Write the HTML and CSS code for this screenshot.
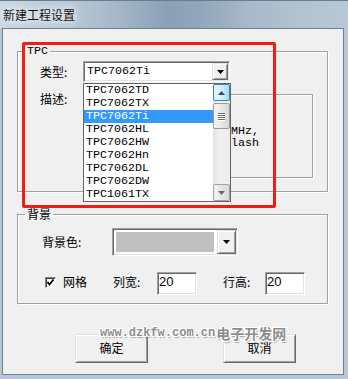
FILE: index.html
```html
<!DOCTYPE html>
<html lang="zh-CN">
<head>
    <meta charset="UTF-8">
    <title>新建工程设置</title>
    <link rel="stylesheet" href="styles.css">
</head>
<body>
    <div class="window">
        <!-- 标题栏 -->
        <div class="titlebar">新建工程设置</div>

        <div class="client">
            <!-- TPC 分组 -->
            <div class="group group-tpc">
                <span class="caption mono">TPC</span>
                <div class="field-row type-row">
                    <span class="label">类型:</span>
                    <div class="combo">
                        <span class="combo-text mono">TPC7062Ti</span>
                        <span class="combo-btn">
                            <svg width="7" height="4" viewBox="0 0 7 4"><polygon points="0,0 7,0 3.5,4" fill="#000"/></svg>
                        </span>
                        <!-- 下拉列表 -->
                        <div class="droplist">
                            <ul class="items mono">
                                <li>TPC7062TD</li>
                                <li>TPC7062TX</li>
                                <li class="selected">TPC7062Ti</li>
                                <li>TPC7062HL</li>
                                <li>TPC7062HW</li>
                                <li>TPC7062Hn</li>
                                <li>TPC7062DL</li>
                                <li>TPC7062DW</li>
                                <li>TPC1061TX</li>
                            </ul>
                            <div class="scrollbar">
                                <span class="sb-btn sb-up">
                                    <svg width="7" height="4" viewBox="0 0 7 4"><polygon points="0,4 7,4 3.5,0" fill="#2c4a66"/></svg>
                                </span>
                                <div class="sb-track">
                                    <span class="sb-thumb">
                                        <span class="grip"></span>
                                        <span class="grip"></span>
                                        <span class="grip"></span>
                                        <span class="grip"></span>
                                    </span>
                                </div>
                                <span class="sb-btn sb-down">
                                    <svg width="7" height="4" viewBox="0 0 7 4"><polygon points="0,0 7,0 3.5,4" fill="#6a6a6a"/></svg>
                                </span>
                            </div>
                        </div>
                    </div>
                </div>
                <div class="field-row desc-row">
                    <span class="label desc-label">描述:</span>
                    <div class="desc-frame mono">
                        <div>CPU 600MHz,</div>
                        <div>128MB Flash</div>
                    </div>
                </div>
            </div>

            <!-- 背景 分组 -->
            <div class="group group-bg">
                <span class="caption">背景</span>
                <div class="field-row color-row">
                    <span class="label color-label">背景色:</span>
                    <div class="color-combo">
                        <span class="swatch"></span>
                        <span class="color-btn">
                            <svg width="7" height="4" viewBox="0 0 7 4"><polygon points="0,0 7,0 3.5,4" fill="#000"/></svg>
                        </span>
                    </div>
                </div>
                <div class="field-row grid-row">
                    <span class="checkbox">
                        <svg width="9" height="9" viewBox="0 0 9 9"><polyline points="1.5,4 3.5,6.5 7.5,1.5" fill="none" stroke="#000" stroke-width="1.8"/></svg>
                    </span>
                    <span class="check-label">网格</span>
                    <span class="label col-label">列宽:</span>
                    <span class="edit">20</span>
                    <span class="label row-label">行高:</span>
                    <span class="edit">20</span>
                </div>
            </div>

            <!-- 按钮 -->
            <div class="buttons">
                <span class="button">确定</span>
                <span class="button">取消</span>
            </div>

            <!-- 水印 -->
            <div class="watermark"><span class="wm-url">www.dzkfw.com.cn</span><span class="wm-name">电子开发网</span></div>
        </div>

        <!-- 红色标注框 -->
        <div class="mark"></div>
    </div>
</body>
</html>
```

FILE: styles.css
```css
/* 全局 */
body {
    margin: 0;
    padding: 0;
    font-family: "Noto Sans CJK SC", "Liberation Sans", sans-serif;
    font-size: 12px;
    color: #000;
    overflow: hidden;
}

.mono {
    font-family: "Liberation Mono", "Noto Sans CJK SC", monospace;
    font-size: 11.67px;
}

/* 窗口 */
.window {
    position: relative;
    width: 348px;
    height: 379px;
    background: #b7c6d5;
    display: flex;
    flex-direction: column;
}

.titlebar {
    height: 28px;
    line-height: 28px;
    padding-left: 3px;
    border-top: 1px solid #6b7c8d;
    box-sizing: border-box;
    background: linear-gradient(90deg, #cad6e2 0%, #b9c8d7 20%, #a3b5c7 35%, #8aa0b6 48%, #92a7bb 58%, #a8b9ca 72%, #b3c3d2 88%, #b8c7d6 100%);
    color: #111;
    text-shadow: 0 0 6px #fff, 0 0 10px #fff;
}

.client {
    position: relative;
    flex: 1;
    margin: 0 4px 4px 2px;
    background: #f0f0f0;
    border: 1px solid #6e8091;
}

/* 分组框 */
.group {
    position: relative;
    box-sizing: border-box;
    width: 311px;
    margin-left: 14px;
    border: 1px solid #a0a0a0;
    box-shadow: inset 1px 1px 0 #fff, 1px 1px 0 #fff;
}

.group-tpc {
    margin-top: 22px;
    height: 141px;
}

.group-bg {
    margin-top: 22px;
    height: 90px;
}

.caption {
    position: absolute;
    top: -8px;
    left: 7px;
    padding: 0 2px;
    line-height: 14px;
    background: #f0f0f0;
}

.field-row {
    display: flex;
    align-items: center;
}

.label {
    flex: none;
    line-height: 14px;
}

/* 类型 */
.type-row {
    margin-top: 9px;
    padding-left: 22px;
}

.type-row .label,
.desc-label {
    width: 43px;
}

.combo {
    position: relative;
    box-sizing: border-box;
    width: 147px;
    height: 21px;
    display: flex;
    align-items: center;
    background: #fff;
    border: 1px solid;
    border-color: #a0a0a0 #fff #fff #a0a0a0;
    box-shadow: inset 1px 1px 0 #696969, inset -1px -1px 0 #e3e3e3;
    z-index: 2;
}

.combo-text {
    flex: 1;
    padding-left: 3px;
    line-height: 13px;
}

.combo-btn,
.color-btn {
    display: flex;
    align-items: center;
    justify-content: center;
    box-sizing: border-box;
    background: #f0f0f0;
    border: 1px solid;
    border-color: #e3e3e3 #696969 #696969 #e3e3e3;
    box-shadow: inset 1px 1px 0 #fff, inset -1px -1px 0 #a0a0a0;
}

.combo-btn {
    width: 16px;
    height: 17px;
    margin-right: 1px;
}

/* 下拉列表 */
.droplist {
    position: absolute;
    left: -1px;
    top: 21px;
    box-sizing: border-box;
    width: 148px;
    height: 119px;
    display: flex;
    background: #fff;
    border: 1px solid #646464;
}

.items {
    flex: 1;
    margin: 0;
    padding: 0;
    list-style: none;
}

.items li {
    height: 13px;
    line-height: 13px;
    padding-left: 2px;
    white-space: nowrap;
}

.items li.selected {
    background: #3399ff;
    color: #fff;
}

.scrollbar {
    width: 17px;
    display: flex;
    flex-direction: column;
    background: linear-gradient(90deg, #e3e3e3, #f1f1f1 40%, #ececec);
}

.sb-btn {
    display: flex;
    align-items: center;
    justify-content: center;
    box-sizing: border-box;
    height: 17px;
    border: 1px solid #a3a3a3;
    border-radius: 2px;
    background: linear-gradient(90deg, #f3f3f3, #e6e6e6 50%, #d8d8d8);
}

.sb-up {
    border-color: #3c7fb1;
    background: linear-gradient(90deg, #e6f5fd, #d5eefc 50%, #a9dbf6);
}

.sb-track {
    flex: 1;
    padding-top: 2px;
}

.sb-thumb {
    display: flex;
    flex-direction: column;
    align-items: center;
    justify-content: center;
    gap: 1px;
    box-sizing: border-box;
    height: 26px;
    border: 1px solid #9b9b9b;
    border-radius: 2px;
    background: linear-gradient(90deg, #f4f4f4, #e8e8e8 50%, #d6d6d6);
}

.grip {
    width: 7px;
    height: 1px;
    background: #6e6e6e;
    box-shadow: 0 1px 0 #fff;
}

/* 描述 */
.desc-row {
    margin-top: 12px;
    padding-left: 22px;
    align-items: flex-start;
}

.desc-label {
    margin-top: -2px;
}

.desc-frame {
    box-sizing: border-box;
    width: 230px;
    height: 84px;
    padding: 30px 0 0 98px;
    line-height: 12px;
    white-space: nowrap;
    border: 1px solid #a0a0a0;
    box-shadow: inset 1px 1px 0 #fff, 1px 1px 0 #fff;
}

/* 背景色 */
.color-row {
    margin-top: 13px;
    padding-left: 24px;
}

.color-label {
    width: 70px;
}

.color-combo {
    box-sizing: border-box;
    width: 126px;
    height: 28px;
    display: flex;
    align-items: stretch;
    padding: 3px 1px 1px 3px;
    background: #fff;
    border: 1px solid;
    border-color: #a0a0a0 #fff #fff #a0a0a0;
    box-shadow: inset 1px 1px 0 #696969, inset -1px -1px 0 #e3e3e3;
}

.swatch {
    width: 98px;
    margin-bottom: 2px;
    background: #c0c0c0;
}

.color-btn {
    width: 19px;
    margin-left: 3px;
    margin-top: -2px;
}

/* 网格 */
.grid-row {
    margin-top: 16px;
    padding-left: 27px;
}

.grid-row .label,
.check-label,
.checkbox {
    margin-bottom: 3px;
}

.checkbox {
    display: flex;
    align-items: center;
    justify-content: center;
    box-sizing: border-box;
    width: 11px;
    height: 11px;
    background: #fff;
    border: 1px solid;
    border-color: #808080 #fff #fff #808080;
    box-shadow: inset 1px 1px 0 #404040;
}

.check-label {
    width: 50px;
    margin-left: 7px;
    line-height: 14px;
}

.col-label {
    width: 44px;
}

.row-label {
    width: 42px;
    margin-left: 26px;
}

.edit {
    box-sizing: border-box;
    width: 40px;
    height: 23px;
    padding-left: 1px;
    line-height: 18px;
    font-family: "Liberation Sans", sans-serif;
    font-size: 13px;
    background: #fff;
    border: 1px solid;
    border-color: #a0a0a0 #fff #fff #a0a0a0;
    box-shadow: inset 1px 1px 0 #696969, inset -1px -1px 0 #e3e3e3;
}

/* 按钮 */
.buttons {
    display: flex;
    gap: 75px;
    margin-top: 30px;
    padding-left: 72px;
}

.button {
    box-sizing: border-box;
    width: 73px;
    height: 29px;
    line-height: 26px;
    text-align: center;
    background: #f0f0f0;
    border: 1px solid;
    border-color: #e3e3e3 #696969 #696969 #e3e3e3;
    box-shadow: inset 1px 1px 0 #fff, inset -1px -1px 0 #a0a0a0;
}

/* 水印 */
.watermark {
    position: absolute;
    left: 97px;
    top: 295px;
    display: flex;
    align-items: center;
    white-space: nowrap;
    font-weight: bold;
    color: #8d8d8d;
    text-shadow: 1px 0 0 #fff, -1px 0 0 #fff, 0 1px 0 #fff, 0 -1px 0 #fff,
        1px 1px 0 #fff, -1px -1px 0 #fff, 1px -1px 0 #fff, -1px 1px 0 #fff,
        1px 2px 1px rgba(0, 0, 0, 0.35);
}

.wm-url {
    font-family: "Liberation Mono", monospace;
    font-size: 12px;
}

.wm-name {
    margin-left: 1px;
    font-size: 14px;
    line-height: 18px;
}

/* 红色标注框 */
.mark {
    position: absolute;
    left: 22px;
    top: 42px;
    width: 254px;
    height: 166px;
    box-sizing: border-box;
    border: 3px solid #f01c16;
    border-radius: 2px;
    z-index: 5;
}
```
